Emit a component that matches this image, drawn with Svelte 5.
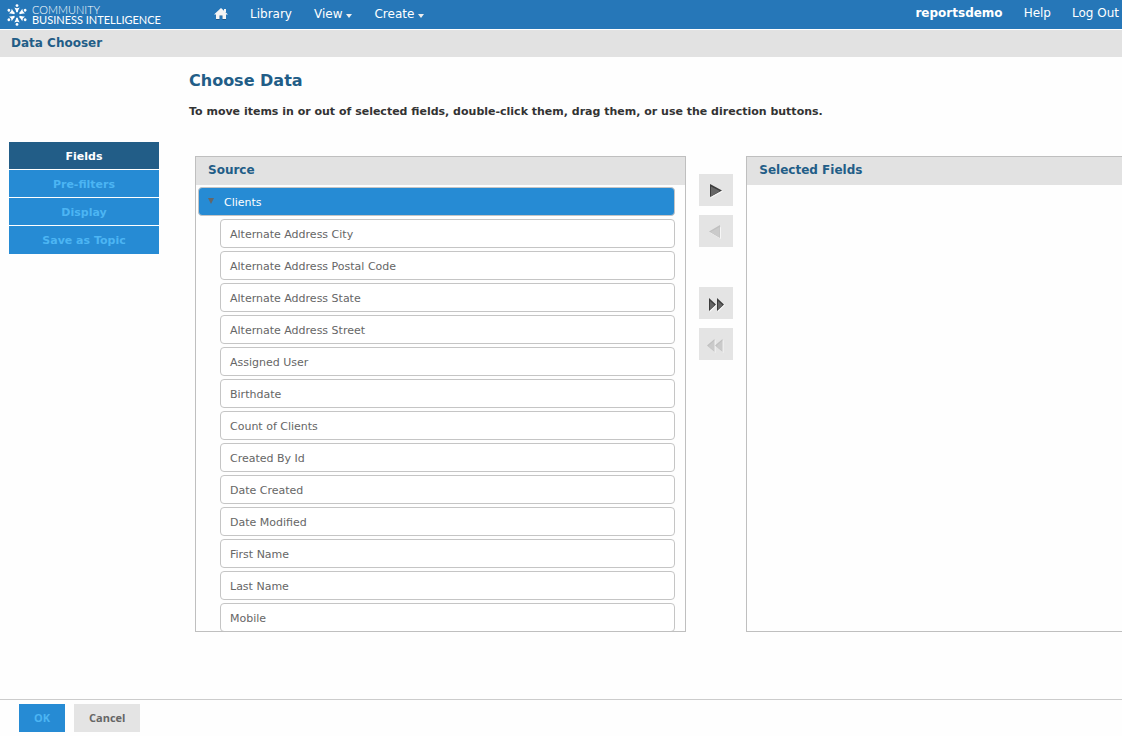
<script>
	let activeStep = $state('Fields');
	let isOpen = $state(true);

	const steps = ['Fields', 'Pre-filters', 'Display', 'Save as Topic'];

	const fields = [
		'Alternate Address City',
		'Alternate Address Postal Code',
		'Alternate Address State',
		'Alternate Address Street',
		'Assigned User',
		'Birthdate',
		'Count of Clients',
		'Created By Id',
		'Date Created',
		'Date Modified',
		'First Name',
		'Last Name',
		'Mobile'
	];
</script>

<div class="page">
	<header>
		<a class="logo" href="#home">
			<svg viewBox="0 0 22 22" aria-hidden="true">
				{#each [0, 60, 120, 180, 240, 300] as angle}
					<g transform="rotate({angle} 11 11)">
						<circle cx="11" cy="1.6" r="1.4"></circle>
						<path d="M8.3 3.4 Q11 5 13.7 3.4 Q12.4 5.2 11.7 8.2 H10.3 Q9.6 5.2 8.3 3.4Z"></path>
					</g>
				{/each}
			</svg>
			<span class="brand"><span>COMMUNITY</span><strong>BUSINESS INTELLIGENCE</strong></span>
		</a>
		<nav class="menu">
			<a href="#home" aria-label="Home"
				><svg class="home" viewBox="0 0 14 12"
					><path class="shade" d="M2 6.5h10V12H8.5V8h-3v4H2z"></path><path
						d="M7 0 14 6.5H12V11H8.5V7.5h-3V11H2V6.5H0zM10 1h2v3h-2z"
					></path></svg
				></a
			>
			<a href="#library">Library</a>
			<a href="#view">View <i class="caret"></i></a>
			<a href="#create">Create <i class="caret"></i></a>
		</nav>
		<nav class="account">
			<a href="#account"><b>reportsdemo</b></a>
			<a href="#help">Help</a>
			<a href="#logout">Log Out</a>
		</nav>
	</header>
	<h1>Data Chooser</h1>

	<div class="body">
		<aside>
			{#each steps as step}
				<button
					type="button"
					class="step"
					class:active={activeStep === step}
					onclick={() => (activeStep = step)}>{step}</button
				>
			{/each}
		</aside>

		<main>
			<h2>Choose Data</h2>
			<p>
				To move items in or out of selected fields, double-click them, drag them, or use the
				direction buttons.
			</p>
			<div class="chooser">
				<section class="panel source">
					<h3>Source</h3>
					<div class="tree">
						<button
							type="button"
							class="group"
							aria-expanded={isOpen}
							onclick={() => (isOpen = !isOpen)}
							><svg viewBox="0 0 6 6" aria-hidden="true"><path d="M0 0H6L3 6Z"></path></svg
							>Clients</button
						>
						{#if isOpen}
							<ul>
								{#each fields as field}
									<li draggable="true">{field}</li>
								{/each}
							</ul>
						{/if}
					</div>
				</section>

				<div class="moves">
					<button type="button" aria-label="Add field"
						><svg viewBox="0 0 34 32"
							><path class="light" d="M12 12 24 17.5 12 24Z"></path><path
								class="edge"
								d="M11 10 23 16.5 11 23Z"
							></path><path d="M12 12.5 21 17 12 22.5Z"></path></svg
						></button
					>
					<button type="button" aria-label="Remove field" disabled
						><svg viewBox="0 0 34 32"
							><path class="light" d="M22 12V24L11 17.5Z"></path><path
								class="edge"
								d="M21 10V23L10 16.5Z"
							></path><path d="M20.5 12V22.5L11.5 17Z"></path></svg
						></button
					>
					<button class="all" type="button" aria-label="Add all fields"
						><svg viewBox="0 0 34 32"
							><path class="light" d="M11 12 18 18 11 25ZM19 12 26 18 19 25Z"></path><path
								class="edge"
								d="M10 11 17 17.5 10 24ZM18 11 25 17.5 18 24Z"
							></path><path d="M11 14 15.5 18 11 22.5ZM19 14 23.5 18 19 22.5Z"></path></svg
						></button
					>
					<button type="button" aria-label="Remove all fields" disabled
						><svg viewBox="0 0 34 32"
							><path class="light" d="M16.5 12V25L9 18ZM24.5 12V25L17 18Z"></path><path
								class="edge"
								d="M15.5 11V24L8 17.5ZM23.5 11V24L16 17.5Z"
							></path><path d="M15 13V23L9.5 18ZM23 13V23L17.5 18Z"></path></svg
						></button
					>
				</div>

				<section class="panel selected">
					<h3>Selected Fields</h3>
				</section>
			</div>
		</main>
	</div>

	<footer>
		<button type="button" class="ok">OK</button>
		<button type="button" class="cancel">Cancel</button>
	</footer>
</div>

<style>
	:global(body) {
		margin: 0;
		background: #fefefe;
	}
	.page {
		display: flex;
		flex-direction: column;
		height: 100vh;
		min-height: 500px;
		overflow: hidden;
		font-family: Verdana, 'DejaVu Sans', sans-serif;
		font-size: 11px;
		color: #666;
	}
	button {
		font: inherit;
		padding: 0;
		border: none;
		cursor: pointer;
	}
	a {
		color: #fff;
		text-decoration: none;
	}
	header {
		display: flex;
		flex: none;
		height: 29px;
		background: #2677b8;
		border-bottom: 1px solid #fff;
	}
	.logo {
		display: flex;
		align-items: center;
		gap: 4px;
		width: 208px;
		padding-left: 6px;
	}
	.logo svg {
		width: 22px;
		height: 22px;
		fill: #fff;
	}
	.brand {
		display: flex;
		flex-direction: column;
		font-family: Lato, sans-serif;
		font-size: 11px;
		line-height: 10px;
		white-space: nowrap;
	}
	.brand span {
		font-weight: 300;
	}
	.brand strong {
		font-weight: 400;
	}
	.menu,
	.account {
		display: flex;
		align-items: center;
		gap: 22px;
		font-size: 12px;
	}
	.menu {
		padding-bottom: 2px;
	}
	.menu a {
		display: flex;
		align-items: center;
		gap: 4px;
	}
	.home {
		display: block;
		width: 14px;
		height: 12px;
		fill: #f4f4f4;
	}
	.home .shade {
		fill: #1b5687;
	}
	.caret {
		margin-top: 4px;
		border: 3px solid transparent;
		border-top: 4px solid #eee;
		border-bottom: none;
	}
	.account {
		gap: 21px;
		margin-left: auto;
		padding: 0 3px 3px 0;
	}
	h1 {
		flex: none;
		margin: 0;
		padding-left: 11px;
		height: 27px;
		font-size: 12px;
		line-height: 26px;
		color: #225d87;
		background: #e2e2e2;
	}
	.body {
		display: flex;
		flex: 1;
		min-height: 0;
	}
	aside {
		display: flex;
		flex: none;
		flex-direction: column;
		width: 150px;
		padding: 85px 30px 0 9px;
	}
	.step {
		height: 28px;
		padding-top: 1px;
		border-bottom: 1px solid #fff;
		font-weight: bold;
		color: #4cb5f3;
		background: #268bd4;
	}
	.step:last-child {
		border-bottom-color: #268bd4;
	}
	.step.active {
		color: #fff;
		background: #225d87;
	}
	main {
		display: flex;
		flex: 1;
		flex-direction: column;
		min-width: 0;
	}
	h2 {
		margin: 14px 0 0;
		font-size: 16px;
		line-height: 20px;
		color: #225d87;
	}
	p {
		margin: 14px 0 0;
		font-weight: bold;
		line-height: 14px;
		color: #333;
	}
	.chooser {
		display: flex;
		flex: 1;
		min-height: 0;
		margin: 37px 0 67px 6px;
	}
	.panel {
		display: flex;
		flex-direction: column;
		min-width: 0;
		border: 1px solid #bfbfbf;
		box-sizing: border-box;
	}
	.source {
		flex: 491 1 0;
	}
	.selected {
		flex: 376 1 0;
		border-right: none;
	}
	h3 {
		flex: none;
		margin: 0;
		padding-left: 12px;
		height: 28px;
		font-size: 12px;
		line-height: 26px;
		color: #225d87;
		background: #e2e2e2;
	}
	.tree {
		flex: 1;
		min-height: 0;
		padding: 2px 10px 0 2px;
		overflow: hidden;
	}
	.group {
		display: flex;
		align-items: center;
		gap: 10px;
		width: 100%;
		height: 29px;
		padding: 2px 0 0 9px;
		border: 1px solid #c5c5c5;
		border-radius: 4px;
		color: #fff;
		background: #268bd4;
	}
	.group svg {
		width: 6px;
		height: 6px;
		margin-bottom: 4px;
		fill: #666;
	}
	ul {
		margin: 0;
		padding: 0 0 0 22px;
		list-style: none;
	}
	li {
		margin-top: 3px;
		padding: 2px 0 0 9px;
		border: 1px solid #c5c5c5;
		border-radius: 4px;
		line-height: 25px;
		background: #fff;
		cursor: pointer;
	}
	.moves {
		display: flex;
		flex: none;
		flex-direction: column;
		gap: 9px;
		padding: 18px 13px 0;
	}
	.moves button {
		width: 34px;
		height: 32px;
		background: #e4e4e4;
	}
	.moves .all {
		margin-top: 31px;
	}
	.moves svg {
		display: block;
		fill: #666;
	}
	.moves .edge {
		fill: #3c3c3c;
	}
	.moves button:disabled svg {
		fill: #cacaca;
	}
	.moves button:disabled .edge {
		fill: #c0c0c0;
	}
	.moves .light {
		fill: #f6f6f6;
	}
	footer {
		display: flex;
		flex: none;
		gap: 9px;
		padding: 4px 19px;
		border-top: 1px solid #ccc;
	}
	footer button {
		height: 28px;
		padding: 0 15px 2px;
		font-family: 'Open Sans', sans-serif;
		font-size: 11px;
		font-weight: bold;
	}
	.ok {
		color: #4cb5f3;
		background: #268bd4;
	}
	.cancel {
		color: #666;
		background: #e4e4e4;
	}
</style>
